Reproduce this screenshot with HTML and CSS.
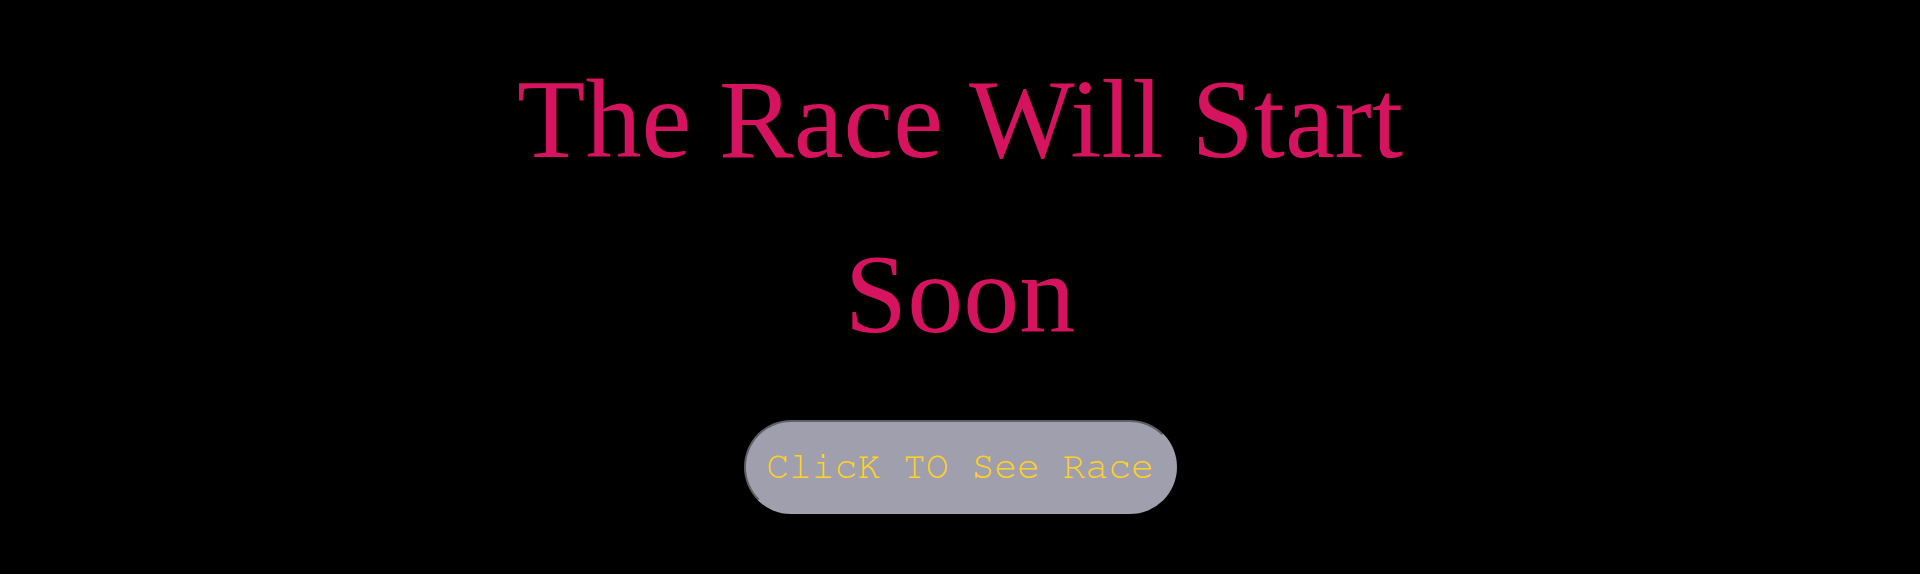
FILE: index.html
```html
<!DOCTYPE html>
<html>
<head>
<meta charset="utf-8">
<title>Race</title>
<link rel="stylesheet" href="styles.css">
</head>
<body>
<main class="page">
  <h1 class="title">The Race Will Start<br>Soon</h1>
  <button class="race-btn" type="button">ClicK TO See Race</button>
</main>
</body>
</html>
```
FILE: styles.css
```css
html, body {
  margin: 0;
  padding: 0;
  background: #000;
  height: 100%;
}
.page {
  display: flex;
  flex-direction: column;
  align-items: center;
  padding-top: 32px;
}
.title {
  margin: 0;
  font-family: "Liberation Serif", "Times New Roman", serif;
  font-weight: normal;
  font-size: 112px;
  line-height: 175px;
  color: #d6135f;
  text-align: center;
}
.race-btn {
  margin-top: 38px;
  box-sizing: border-box;
  width: 433px;
  height: 94px;
  padding: 0;
  font-family: "Nimbus Mono PS", "Nimbus Mono L", FreeMono, Courier, "Courier New", "Liberation Mono", monospace;
  font-size: 38px;
  color: #ffd21f;
  background: #a09fae;
  border-style: solid;
  border-width: 2px;
  border-color: #5f5f66 #a09fae #a09fae #5f5f66;
  border-radius: 47px;
  cursor: pointer;
}
```
